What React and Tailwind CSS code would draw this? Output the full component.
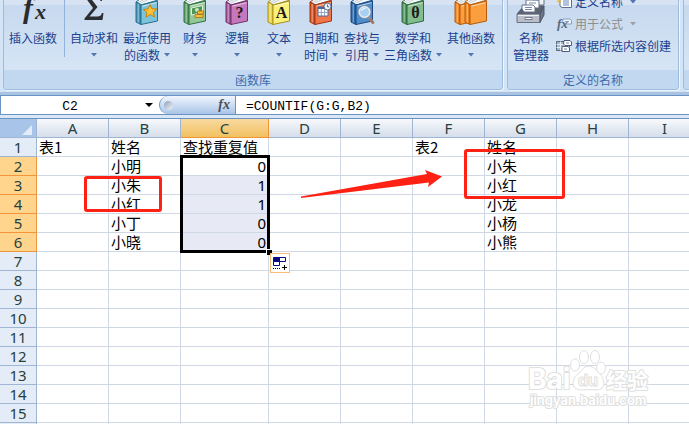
import { useState } from 'react'

const books = [
  { label: ['最近使用', '的函数'], width: 'w-[54px]', cover: '#7cc4dc', spine: '#3f93b8', edge: '#27708f', mark: 'star' },
  { label: ['财务'], width: 'w-[42px]', cover: '#93c795', spine: '#5f9f66', edge: '#2f7440', mark: 'money' },
  { label: ['逻辑'], width: 'w-[42px]', cover: '#c678bd', spine: '#a5539c', edge: '#713069', mark: '?' },
  { label: ['文本'], width: 'w-[42px]', cover: '#fbf07a', spine: '#ecd63e', edge: '#a8901c', mark: 'A' },
  { label: ['日期和', '时间'], width: 'w-[42px]', cover: '#f0764a', spine: '#d9531f', edge: '#a03510', mark: 'calendar' },
  { label: ['查找与', '引用'], width: 'w-[40px]', cover: '#4f8ecb', spine: '#2a67a8', edge: '#1b4880', mark: 'search' },
  { label: ['数学和', '三角函数'], width: 'w-[62px]', cover: '#84bd8c', spine: '#4f9560', edge: '#2d6b3f', mark: 'θ' },
  { label: ['其他函数'], width: 'w-[54px]', cover: '#fb9f3e', spine: '#ee8420', edge: '#b85a08', mark: 'pair' },
]

const columns = ['A', 'B', 'C', 'D', 'E', 'F', 'G', 'H', 'I']

const cells = {
  A1: '表1', B1: '姓名', C1: '查找重复值', F1: '表2', G1: '姓名',
  B2: '小明', C2: 0, G2: '小朱',
  B3: '小朱', C3: 1, G3: '小红',
  B4: '小红', C4: 1, G4: '小龙',
  B5: '小丁', C5: 0, G5: '小杨',
  B6: '小晓', C6: 0, G6: '小熊',
}

function Caret({ className = 'text-[#4f76b3]' }) {
  return (
    <svg width="6" height="4" viewBox="0 0 6 4" className={`inline-block shrink-0 align-middle ${className}`}>
      <path d="M0 0h6L3 3.500z" fill="currentColor" />
    </svg>
  )
}

function BookShape({ cover, spine, edge }) {
  return (
    <g strokeLinejoin="round">
      <path d="M1 2 8-3 23-3v3L6 5z" fill="#f7fafc" stroke={edge} />
      <path d="M3 2.500 12-2M5 3.500 16-2" stroke="#aab4bd" strokeWidth=".7" />
      <path d="M1 2Q3 2.500 6 5v19.500L1 22z" fill={spine} stroke={edge} />
      <path d="M6 5 22.500 1v20L6 24.500z" fill={cover} stroke={edge} />
      <path d="M7.500 6.200 21.500 2.700" stroke="#fff" strokeOpacity=".6" />
      <path d="M3.200 4v18.500" stroke="#fff" strokeOpacity=".5" />
    </g>
  )
}

function Book({ cover, spine, edge, mark }) {
  return (
    <svg width="34" height="27" viewBox="-5 0 34 27" fill="none">
      {mark === 'pair' ? (
        <>
          <g transform="translate(-5 0)"><BookShape cover={cover} spine={spine} edge={edge} /></g>
          <g transform="translate(5 0)"><BookShape cover={cover} spine={spine} edge={edge} /></g>
        </>
      ) : (
        <BookShape cover={cover} spine={spine} edge={edge} />
      )}
      {mark === 'star' && (
        <path d="m15 4.500 2 4.300 4.800.3-3.600 3.300 1.300 4.600-4.300-2.500-4.200 2.800 1-4.800L8.300 9.500l4.800-.6z" fill="#ffc233" stroke="#c9820b" />
      )}
      {mark === 'money' && (
        <>
          <path d="m8.500 8 11-2.500v7L8.500 15z" fill="#4d9457" stroke="#e4f2d8" />
          <circle cx="14" cy="10" r="2" fill="#d3e7b8" />
          <path d="M12 14.500h8v3h-8zM14.500 11h6v3h-6z" fill="#f5bd3b" stroke="#a87010" strokeWidth=".8" />
        </>
      )}
      {mark === 'calendar' && (
        <>
          <path d="M9 7h10v9H9z" fill="#fff" stroke="#51698f" />
          <path d="M9 8h10" stroke="#4368a3" strokeWidth="2" />
          <path d="M9 12.500h10M12.300 9v7M15.600 9v7" stroke="#7b93ba" strokeWidth=".8" />
          <circle cx="18.500" cy="6.500" r="3.500" fill="#eff5fc" stroke="#5a6e8c" />
          <path d="M18.500 4.500v2.300h1.700" stroke="#33415a" strokeWidth=".8" />
        </>
      )}
      {mark === 'search' && (
        <>
          <path d="m18 16.500 5 6" stroke="#8f8f98" strokeWidth="3" strokeLinecap="round" />
          <path d="m20 19.500 2.500 3" stroke="#a5705c" strokeWidth="2" strokeLinecap="round" />
          <circle cx="14.500" cy="12" r="5.500" fill="#a9cff2" stroke="#e3e9f0" strokeWidth="2" />
          <circle cx="14.500" cy="12" r="6.500" stroke="#6c7f98" strokeWidth=".7" />
          <path d="M11.500 11q1-3 4-2.800" stroke="#fff" />
        </>
      )}
      {mark.length === 1 && (
        <text x="14.500" y="17.500" textAnchor="middle" fontSize="16" fontWeight="700" fontFamily="Liberation Serif, serif" fill="#1d1a1c">{mark}</text>
      )}
    </svg>
  )
}

function LargeButton({ icon, label, width, menu }) {
  return (
    <button className={`flex shrink-0 flex-col items-center whitespace-nowrap leading-[17px] text-[#1c3f8b] ${width}`}>
      <span className="flex h-[29px] items-start">{icon}</span>
      <span>{label[0]}</span>
      {(label[1] || menu) && (
        <span className="flex h-[17px] items-center gap-1">
          {label[1]}
          {menu && <Caret />}
        </span>
      )}
    </button>
  )
}

function Group({ title, className, children }) {
  return (
    <section className={`flex h-[90px] flex-col overflow-hidden rounded-b border border-t-0 border-[#9dbcde] bg-linear-to-b from-[#c6d8ee] to-[#dae9f8] shadow-[1px_1px_0_#eef6fd] ${className}`}>
      <div className="flex h-[70px] border-t-[5px] border-[#d7e3f3]">
        <div className="-mt-[5px] flex">{children}</div>
      </div>
      <h2 className="h-[19px] bg-[#c1d8f0] text-center leading-[19px] text-[#3e6aaa]">{title}</h2>
    </section>
  )
}

function FxIcon() {
  return (
    <svg width="30" height="29" viewBox="0 0 30 29" fontFamily="Liberation Serif, serif" fontStyle="italic" fontWeight="700" fill="#2b2b2e">
      <text x="5" y="18" fontSize="30">f</text>
      <text x="17" y="19" fontSize="22">x</text>
    </svg>
  )
}

function SigmaIcon() {
  return (
    <svg width="24" height="27" viewBox="0 0 24 27">
      <path d="M3-5h17v6h-1.500Q18-2 14-2H8.500l7 9-8 9.500h8q3.500 0 4.500-3.500h1.500L20.500 20H2.500v-1.500L11 8 3-3z" fill="#2d2e31" />
    </svg>
  )
}

function NameManagerIcon() {
  return (
    <svg width="32" height="27" viewBox="0 0 32 27" fill="none" strokeLinejoin="round">
      <path d="m2 14 7-8h20l-4 8z" fill="#5c6474" stroke="#4a5364" />
      <path d="M15-3h12q2 0 2 3v5H15z" fill="#eef2f7" stroke="#667085" />
      <path d="M11 0h11q2 0 2 2v6H11z" fill="#fff" stroke="#667085" />
      <path d="M7 5h11l2 2v5H9L7 9z" fill="#fff" stroke="#667085" />
      <path d="M14 3h7M10 7.500h7M10 9.500h7M18 0h7" stroke="#718bb5" />
      <path d="M2 14h23v8.500H2z" fill="#b9bec9" stroke="#697184" />
      <path d="m25 14 4-8v9l-4 7.500z" fill="#6d7587" stroke="#4e586b" />
      <path d="M3 15.500h21" stroke="#eef0f4" />
      <path d="M10 17.500h7v2h-7z" fill="#fff" stroke="#717a8c" />
    </svg>
  )
}

function SmallIcon({ kind }) {
  return (
    <svg width="16" height="14" viewBox="0 0 16 14" fill="none" className="shrink-0">
      {kind === 'define' && (
        <>
          <path d="M6 3h8l1.500 2v7.500H6L4 11V5z" fill="#fff" stroke="#5e6f8c" />
          <path d="M7 6h6M7 8h6M7 10h6" stroke="#6486bb" />
          <path d="M3 1v7M0 4.500h6M1 2l4 5M5 2 1 7" stroke="#efb51f" />
        </>
      )}
      {kind === 'use' && (
        <>
          <path d="M7 2h7l1.500 1.500V7H8L6.500 5.500z" fill="#eef3fa" stroke="#8b9db8" />
          <path d="M9 4.500h4" stroke="#8b9db8" />
          <text x="1" y="11" fontFamily="Liberation Serif, serif" fontSize="13" fontStyle="italic" fontWeight="700" fill="#596983">fx</text>
        </>
      )}
      {kind === 'create' && (
        <>
          <path d="M.5 2.500h13v9H.5z" fill="#a9b7cd" stroke="#566781" />
          <path d="M.5 5.500h13M.5 8.500h13M4.500 2.500v9M9 2.500v9" stroke="#e8edf5" />
          <path d="M8 1.500h6l1.500 1.500v3.500H9L7.500 5z" fill="#fff" stroke="#4d5d78" />
          <path d="M6 7.500h6l1.500 1.500v3.500H6z" fill="#fff" stroke="#4d5d78" />
          <path d="M10 4h3M8 10h3" stroke="#6f86aa" />
        </>
      )}
    </svg>
  )
}

function SmallButton({ kind, label, menu, disabled }) {
  return (
    <button disabled={disabled} className="flex h-[22px] items-center gap-[3px] whitespace-nowrap text-[#1c3f8b] disabled:text-[#8d8d8d]">
      <SmallIcon kind={kind} />
      {label}
      {menu && <Caret className={disabled ? 'ml-1 text-[#a0a0a0]' : 'ml-1 text-[#4f76b3]'} />}
    </button>
  )
}

function Ribbon() {
  return (
    <div className="flex gap-1 overflow-hidden border-b-[3px] border-[#a9c3e2] bg-[#d3e4f6] pb-[2px] pl-[3px] text-xs">
      <Group title="函数库" className="w-[500px] shrink-0">
        <LargeButton icon={<FxIcon />} label={['插入函数']} width="w-[58px]" />
        <div className="mr-[3px] ml-[2px] h-[57px] w-px bg-[#91b2da]" />
        <LargeButton icon={<SigmaIcon />} label={['自动求和']} width="w-[52px]" menu />
        {books.map((b) => (
          <LargeButton key={b.mark} icon={<Book {...b} />} label={b.label} width={b.width} menu />
        ))}
      </Group>
      <Group title="定义的名称" className="w-[172px] shrink-0">
        <LargeButton icon={<NameManagerIcon />} label={['名称', '管理器']} width="w-[46px]" />
        <div className="-mt-[9px] ml-[2px] flex flex-col">
          <SmallButton kind="define" label="定义名称" menu />
          <SmallButton kind="use" label="用于公式" menu disabled />
          <SmallButton kind="create" label="根据所选内容创建" />
        </div>
      </Group>
      <Group className="min-w-2 flex-1" />
    </div>
  )
}

function FormulaBar() {
  const [name, setName] = useState('C2')
  const [formula, setFormula] = useState('=COUNTIF(G:G,B2)')

  return (
    <div className="flex h-5 border-y border-l border-[#6a93c1] bg-white font-['Liberation_Mono','Noto_Sans_CJK_SC',monospace] text-[13px] text-black">
      <input
        aria-label="Name box"
        value={name}
        onChange={(e) => setName(e.target.value)}
        className="w-[138px] min-w-0 pt-[3px] text-center outline-none"
      />
      <button aria-label="Names" className="flex w-5 items-center justify-center">
        <svg width="8" height="4" viewBox="0 0 8 4"><path d="M0 0h8L4 4z" /></svg>
      </button>
      <div className="flex w-[77px] items-center justify-between rounded-l-full border-r border-l border-[#6a93c1] bg-linear-to-b from-[#f1f6fc] to-[#a9c4e8] pr-[5px] pl-1">
        <span className="size-[9px] rounded-full bg-linear-to-br from-[#8f9fb8] to-[#f4f7fb]" />
        <button aria-label="Insert function" className="font-['Liberation_Serif',serif] text-sm leading-4 font-bold text-[#4b4f57] italic">fx</button>
      </div>
      <input
        aria-label="Formula"
        value={formula}
        onChange={(e) => setFormula(e.target.value)}
        className="min-w-0 flex-1 pt-[3px] pl-[10px] outline-none"
      />
    </div>
  )
}

function Sheet() {
  const rows = Array.from({ length: 16 }, (_, i) => i + 1)
  const isActive = (row) => row >= 2 && row <= 6

  return (
    <table className="w-[701px] table-fixed border-separate border-spacing-0 text-[15px] leading-[18px] text-black">
      <colgroup>
        <col className="w-[37px]" />
        {columns.map((c) => (
          <col key={c} className={c === 'C' ? 'w-[88px]' : 'w-[72px]'} />
        ))}
      </colgroup>
      <thead>
        <tr className="h-[19px] font-['Noto_Sans',sans-serif] text-[#27413e]">
          <th aria-label="Select all" className="border-r border-b border-[#9eb6d3] bg-[#a9c4e9] p-0">
            <svg width="10" height="10" viewBox="0 0 10 10" className="mt-1 mr-1 ml-auto block"><path d="M10 0v10H0z" fill="#e4ecf7" /></svg>
          </th>
          {columns.map((c) => (
            <th
              key={c}
              className={`border-r border-b p-0 font-normal ${c === 'C' ? 'border-[#f29536] bg-linear-to-b from-[#f9d99f] to-[#f1c15f]' : 'border-[#9eb6d3] bg-linear-to-b from-[#f7f9fc] to-[#d5deea]'}`}
            >
              {c}
            </th>
          ))}
        </tr>
      </thead>
      <tbody>
        {rows.map((row) => (
          <tr key={row} className="h-[19px]">
            <th className={`border-r border-b p-0 font-['Noto_Sans',sans-serif] font-normal text-[#27413e] ${isActive(row) ? 'border-[#f29536] bg-[#ffd58d]' : 'border-[#9eb6d3] bg-[#e4ecf7]'}`}>
              {row}
            </th>
            {columns.map((c) => {
              const value = cells[c + row]
              const selected = c === 'C' && row > 2 && isActive(row)
              return (
                <td
                  key={c}
                  className={`h-[19px] border-r border-b border-[#d0d7e5] px-[2px] py-0 whitespace-nowrap ${typeof value === 'number' ? "text-right font-['Noto_Sans',sans-serif]" : ''} ${selected ? 'bg-[#e7eaf5]' : ''}`}
                >
                  {value}
                </td>
              )
            })}
          </tr>
        ))}
      </tbody>
    </table>
  )
}

function Annotations() {
  return (
    <>
      {/* selected range with its fill handle */}
      <div className="absolute top-[36px] left-[180px] h-[98px] w-[90px] border-[3px] border-black" />
      <div className="absolute top-[130px] left-[266px] size-[6px] border-t border-l border-white bg-black" />
      <button aria-label="Auto fill options" className="absolute top-[134px] left-[270px] size-5 border border-[#f5bd76] bg-white">
        <svg width="18" height="18" viewBox="0 0 18 18" fill="none">
          <path d="M2.500 3.500h6v4h-6zM2.500 7.500h6v4h-6zM8.500 3.500h6v4h-6z" stroke="#0a0a80" />
          <path d="M3 3h6v4H3z" fill="#0a0a80" />
          <path d="M2 14.500h7" stroke="#000" strokeDasharray="1 1" />
          <path d="M11 13.500h5M13.500 11v5" stroke="#000" />
        </svg>
      </button>

      <div className="absolute top-[57px] left-[84px] h-[36px] w-[78px] rounded-[3px] border-3 border-[#ff2113]" />
      <div className="absolute top-[30px] left-[464px] h-[50px] w-[101px] rounded-[3px] border-3 border-[#ff2113]" />
      <svg width="144" height="32" viewBox="300 168 144 32" className="absolute top-[49px] left-[300px]">
        <path d="M301 196.500 427 174l-2-4 17 6.500L428 187l1-4.500L301 198z" fill="#ff2113" />
      </svg>
    </>
  )
}

function Watermark() {
  return (
    <svg
      width="130"
      height="64"
      viewBox="0 0 130 64"
      className="absolute top-[229px] left-[527px]"
      fill="#fff"
      stroke="#e0e0e0"
      strokeWidth="2"
      strokeLinejoin="round"
      fontFamily="Inter, 'Noto Sans CJK SC', sans-serif"
      fontWeight="700"
    >
      <g style={{ paintOrder: 'stroke' }}>
        <text x="1" y="41" fontSize="28">Bai</text>
        <text x="79" y="40" fontSize="21">经验</text>
        <text x="3" y="57" fontSize="13" fontWeight="600">jingyan.baidu.com</text>
      </g>
      <g strokeWidth="1">
        <ellipse cx="48" cy="17" rx="4.500" ry="6" />
        <ellipse cx="57" cy="9" rx="4.500" ry="6.500" />
        <ellipse cx="68" cy="9" rx="4.500" ry="6.500" />
        <ellipse cx="74" cy="20" rx="4.500" ry="6" />
        <path d="M62 18q5 0 9 6 6 5 6 11 0 7-8 7-7-1-14 0-9 0-9-7 0-6 7-11 4-6 9-6z" />
      </g>
      <text x="51" y="38" fontSize="16" strokeWidth="1">du</text>
    </svg>
  )
}

export default function App() {
  return (
    <main className="flex h-screen flex-col overflow-hidden bg-white font-['Noto_Sans_CJK_SC',sans-serif]">
      <Ribbon />
      <FormulaBar />
      <div className="h-1 shrink-0 border-b border-[#6a93c1] bg-[#d9e7f6]" />
      <div className="relative min-h-0 flex-1 overflow-hidden">
        <Sheet />
        <Annotations />
        <Watermark />
      </div>
    </main>
  )
}
